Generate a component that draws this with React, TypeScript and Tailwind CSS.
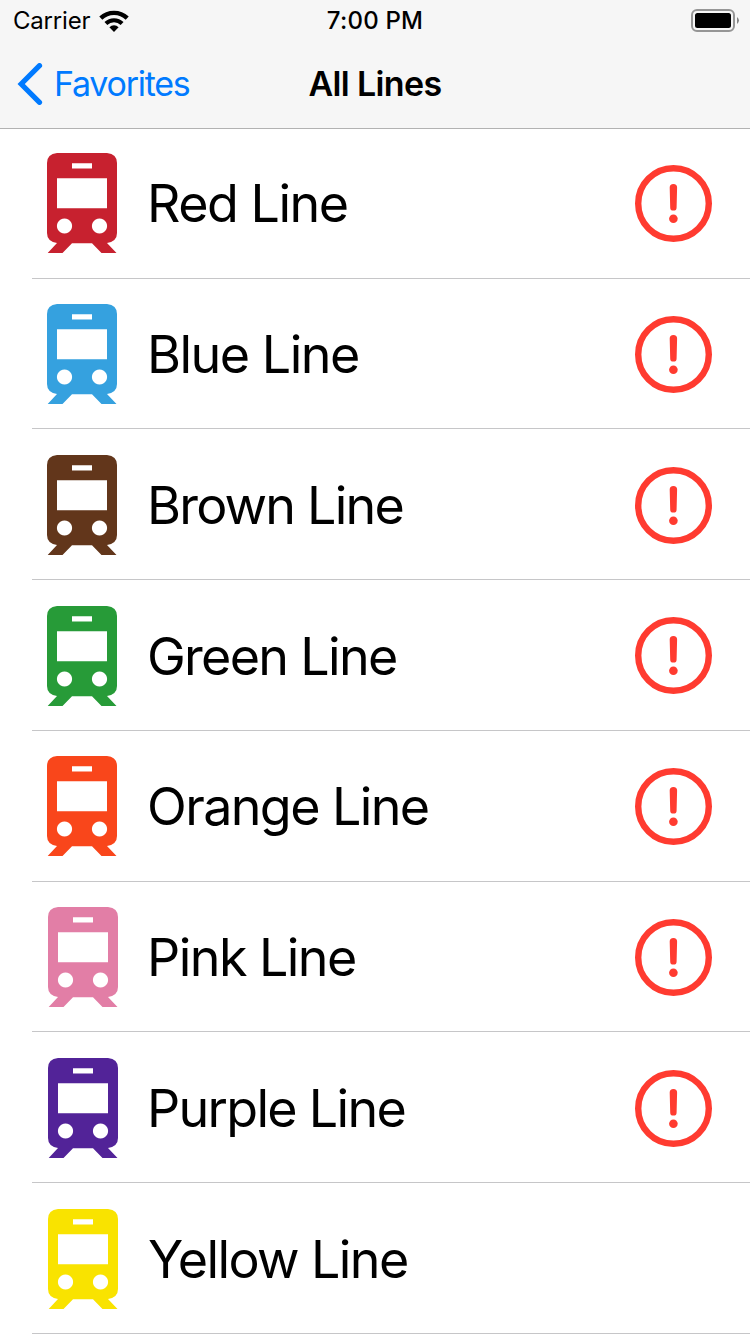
type Line = {
  name: string;
  color: string;
  row: string;
  icon: string;
  label: string;
  alert: string | null;
};

const lines: Line[] = [
  { name: 'Red Line', color: '#c7212f', row: 'h-[150px] pt-[24px]', icon: 'ml-[47px]', label: 'ml-[30px] tracking-[-1.5px]', alert: 'mt-[12px]' },
  { name: 'Blue Line', color: '#35a1df', row: 'h-[150px] pt-[25px]', icon: 'ml-[47px]', label: 'ml-[30px] tracking-[-1.5px]', alert: 'mt-[12px]' },
  { name: 'Brown Line', color: '#62361b', row: 'h-[151px] pt-[26px]', icon: 'ml-[47px]', label: 'ml-[30px] tracking-[-1.8px]', alert: 'mt-[12px]' },
  { name: 'Green Line', color: '#279b38', row: 'h-[151px] pt-[26px]', icon: 'ml-[47px]', label: 'ml-[30px] tracking-[-1.7px]', alert: 'mt-[11px]' },
  { name: 'Orange Line', color: '#f9461b', row: 'h-[151px] pt-[25px]', icon: 'ml-[47px]', label: 'ml-[30px] tracking-[-1.6px]', alert: 'mt-[12px]' },
  { name: 'Pink Line', color: '#e27ea6', row: 'h-[150px] pt-[25px]', icon: 'ml-[48px]', label: 'ml-[29px] tracking-[-1.55px]', alert: 'mt-[12px]' },
  { name: 'Purple Line', color: '#522398', row: 'h-[151px] pt-[26px]', icon: 'ml-[48px]', label: 'ml-[29px] tracking-[-1.7px]', alert: 'mt-[12px]' },
  { name: 'Yellow Line', color: '#f9e300', row: 'h-[151px] pt-[26px]', icon: 'ml-[48px]', label: 'ml-[30px] tracking-[-1.6px]', alert: null },
];

function TrainIcon({ color, className }: { color: string; className: string }) {
  return (
    <svg className={`h-[100px] w-[70px] shrink-0 ${className}`} viewBox="0 0 70 100" fill={color}>
      <path
        fillRule="evenodd"
        d="M10 0H60Q70 1 70 10V80Q70 88.500 60 90L69.500 100H54.500L45 90.300H25L15.500 100H.7L10 90Q0 88.500 0 80V10Q0 1 10 0ZM25 10.200V15.500H45V10.200ZM10 25.300V55.300H60V25.300ZM17.500 65.400a7.600 7.600 0 1 0 .01 0ZM52.500 65.400a7.600 7.600 0 1 0 .01 0Z"
      />
    </svg>
  );
}

function AlertIcon({ className }: { className: string }) {
  return (
    <svg className={`mr-[38px] ml-auto size-[77px] shrink-0 ${className}`} viewBox="0 0 77 77" fill="#ff3b30">
      <circle cx="38.500" cy="38.500" r="35.300" fill="none" stroke="#ff3b30" strokeWidth="6.400" />
      <path d="M34.700 22.600a3.700 3.700 0 0 1 7.400 0L41.600 42.400a3.200 3.200 0 0 1-6.400 0Z" />
      <circle cx="38.400" cy="53.700" r="4.300" />
    </svg>
  );
}

export default function App() {
  return (
    <div className="flex h-[1334px] w-[750px] flex-col overflow-hidden bg-white font-['Inter','Liberation_Sans',sans-serif] text-black">
      <header className="h-[129px] shrink-0 border-b border-[#b2b2b2] bg-[#f6f6f6]">
        <div className="grid h-10 grid-cols-3 items-center">
          <div className="flex items-center pl-[13px]">
            <span className="pt-px text-[24px] leading-[40px] tracking-[-0.2px]">Carrier</span>
            <svg className="ml-[9px] h-[22px] w-[30px]" viewBox="0 0 30 22" fill="none" stroke="black">
              <path d="M1.800 8.200A19.100 19.100 0 0 1 28.200 8.200" strokeWidth="4.400" />
              <path d="M6.900 13.500A11.700 11.700 0 0 1 23.100 13.500" strokeWidth="4.100" />
              <path d="M15 21.900L10.400 17.150A6.700 6.700 0 0 1 19.600 17.150Z" fill="black" stroke="none" />
            </svg>
          </div>
          <span className="pt-px text-center text-[24px] leading-[40px] font-medium tracking-[0.2px] whitespace-nowrap">7:00 PM</span>
          <svg className="mr-[10px] h-6 w-[49px] justify-self-end" viewBox="0 0 49 24">
            <rect x="1" y="1" width="42" height="21" rx="5" fill="none" stroke="#969696" strokeWidth="2" />
            <rect x="4" y="4" width="36" height="15" rx="2.500" />
            <path d="M46 8Q50 11.500 46 15Z" fill="#858585" />
          </svg>
        </div>
        <div className="grid h-[88px] grid-cols-3 items-center">
          <div className="flex items-center pl-[17px] text-[#007aff]">
            <svg className="h-[42px] w-[26px]" viewBox="0 0 26 42" fill="none" stroke="currentColor" strokeWidth="5.200" strokeLinecap="round" strokeLinejoin="miter">
              <path d="M22.500 2.700L4.200 21L22.500 39.300" />
            </svg>
            <span className="ml-[11px] text-[34px] leading-[88px] tracking-[-1.25px]">Favorites</span>
          </div>
          <h1 className="text-center text-[34px] leading-[88px] font-semibold tracking-[-0.65px]">All Lines</h1>
        </div>
      </header>
      <ul className="flex flex-col">
        {lines.map((line) => (
          <li key={line.name} className="shrink-0">
            <div className={`flex items-start ${line.row}`}>
              <TrainIcon color={line.color} className={line.icon} />
              <span className={`text-[52px] leading-[102px] whitespace-nowrap ${line.label}`}>{line.name}</span>
              {line.alert && <AlertIcon className={line.alert} />}
            </div>
            <div className="-mt-px ml-8 h-px bg-[#c6c6c8]" />
          </li>
        ))}
      </ul>
    </div>
  );
}
